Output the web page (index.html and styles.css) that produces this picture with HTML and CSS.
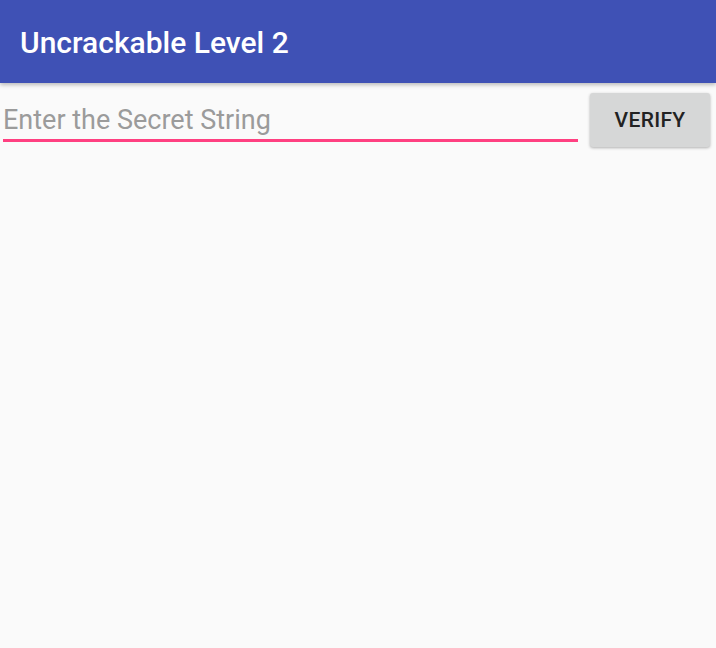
FILE: index.html
```html
<!DOCTYPE html>
<html>
<head>
<meta charset="utf-8">
<link rel="stylesheet" href="styles.css">
</head>
<body>
<header class="appbar"><h1 class="title">Uncrackable Level 2</h1></header>
<main class="row">
  <div class="field"><input class="input" type="text" placeholder="Enter the Secret String"></div>
  <button class="btn">VERIFY</button>
</main>
</body>
</html>
```
FILE: styles.css
```css
html, body { margin: 0; padding: 0; }
body {
  background: #fafafa;
  font-family: Roboto, "Noto Sans", sans-serif;
  width: 716px;
  height: 648px;
  overflow: hidden;
}
.appbar {
  height: 83px;
  background: #3f51b5;
  box-shadow: 0 2px 4px rgba(0,0,0,0.25);
  display: flex;
  align-items: center;
  padding-left: 20px;
  position: relative;
  z-index: 1;
}
.title {
  margin: 0;
  color: #fff;
  font-size: 30px;
  font-weight: 500;
  padding-top: 1px;
}
.row {
  display: flex;
  align-items: flex-start;
  padding: 9px 6px 0 3px;
  gap: 12px;
}
.field {
  flex: 1;
  padding-top: 8px;
}
.input {
  box-sizing: border-box;
  width: 100%;
  height: 42px;
  border: none;
  border-bottom: 3px solid #ff4081;
  background: transparent;
  font-family: Roboto, sans-serif;
  font-size: 27px;
  padding: 0;
  color: #222;
  outline: none;
}
.input::placeholder { color: #9b9b9b; }
.btn {
  width: 120px;
  height: 54px;
  margin-top: 1px;
  border: none;
  border-radius: 3px;
  background: #d6d7d7;
  box-shadow: 0 1px 3px rgba(0,0,0,0.3);
  font-family: Roboto, sans-serif;
  font-weight: 500;
  font-size: 21px;
  color: #222;
  letter-spacing: 0.3px;
}
```
